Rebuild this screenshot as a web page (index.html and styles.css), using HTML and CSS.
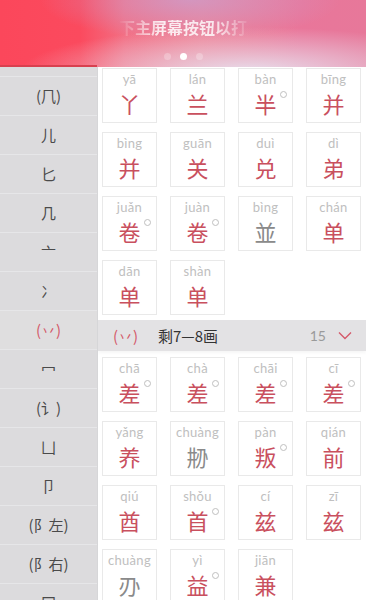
FILE: index.html
```
<!DOCTYPE html>
<html>
	<head>
		<meta charset="UTF-8">
		<title>部首查字</title>
		<link rel="stylesheet" href="styles.css">
	</head>
	<body>
		<div class="screen">
			<div class="banner">
				<div class="banner-text">下主屏幕按钮以打</div>
				<div class="dots"><i></i><i class="on"></i><i></i></div>
			</div>
			<div class="main">
				<div class="radicals">
					<ul>
						<li></li>
						<li>(⺇)</li>
						<li>儿</li>
						<li>匕</li>
						<li>几</li>
						<li>亠</li>
						<li>冫</li>
						<li class="active">(丷)</li>
						<li>冖</li>
						<li>(讠)</li>
						<li>凵</li>
						<li>卩</li>
						<li>(阝左)</li>
						<li>(阝右)</li>
						<li>冂</li>
					</ul>
				</div>
				<div class="chars">
					<div class="grid">
						<div class="card"><span class="py">yā</span><span class="hz">丫</span></div>
						<div class="card"><span class="py">lán</span><span class="hz">兰</span></div>
						<div class="card"><span class="py">bàn</span><span class="hz">半<i class="deg"></i></span></div>
						<div class="card"><span class="py">bīng</span><span class="hz">并</span></div>
						<div class="card"><span class="py">bìng</span><span class="hz">并</span></div>
						<div class="card"><span class="py">guān</span><span class="hz">关</span></div>
						<div class="card"><span class="py">duì</span><span class="hz">兑</span></div>
						<div class="card"><span class="py">dì</span><span class="hz">弟</span></div>
						<div class="card"><span class="py">juǎn</span><span class="hz">卷<i class="deg"></i></span></div>
						<div class="card"><span class="py">juàn</span><span class="hz">卷<i class="deg"></i></span></div>
						<div class="card"><span class="py">bìng</span><span class="hz grey">並</span></div>
						<div class="card"><span class="py">chán</span><span class="hz">单</span></div>
						<div class="card"><span class="py">dān</span><span class="hz">单</span></div>
						<div class="card"><span class="py">shàn</span><span class="hz">单</span></div>
					</div>

					<div class="group-head">
						<span class="g-rad">(丷)</span>
						<span class="g-title">剩7—8画</span>
						<span class="g-count">15</span>
						<svg class="g-arrow" width="14" height="9" viewBox="0 0 14 9"><path d="M1 1.5 L7 7.5 L13 1.5" fill="none" stroke="#d4596a" stroke-width="1.4"/></svg>
					</div>

					<div class="grid">
						<div class="card"><span class="py">chā</span><span class="hz">差<i class="deg"></i></span></div>
						<div class="card"><span class="py">chà</span><span class="hz">差<i class="deg"></i></span></div>
						<div class="card"><span class="py">chāi</span><span class="hz">差<i class="deg"></i></span></div>
						<div class="card"><span class="py">cī</span><span class="hz">差<i class="deg"></i></span></div>
						<div class="card"><span class="py">yǎng</span><span class="hz">养</span></div>
						<div class="card"><span class="py">chuàng</span><span class="hz grey">刱</span></div>
						<div class="card"><span class="py">pàn</span><span class="hz">叛<i class="deg"></i></span></div>
						<div class="card"><span class="py">qián</span><span class="hz">前</span></div>
						<div class="card"><span class="py">qiú</span><span class="hz">酋</span></div>
						<div class="card"><span class="py">shǒu</span><span class="hz">首<i class="deg"></i></span></div>
						<div class="card"><span class="py">cí</span><span class="hz">兹</span></div>
						<div class="card"><span class="py">zī</span><span class="hz">兹</span></div>
						<div class="card"><span class="py">chuàng</span><span class="hz grey">刅</span></div>
						<div class="card"><span class="py">yì</span><span class="hz">益<i class="deg"></i></span></div>
						<div class="card"><span class="py">jiān</span><span class="hz">兼</span></div>
					</div>
				</div>
			</div>
		</div>
	</body>
</html>
```
FILE: styles.css
```
html,
body,
ul,
li {
	margin: 0;
	padding: 0;
}

body {
	width: 366px;
	height: 600px;
	overflow: hidden;
	background: #fff;
	font-family: "Noto Sans CJK SC", "Noto Sans", sans-serif;
}

.screen {
	width: 366px;
	height: 600px;
	display: flex;
	flex-direction: column;
	overflow: hidden;
}

/* 顶部模糊的通知横幅 */
.banner {
	height: 67px;
	flex: none;
	position: relative;
	background:
		radial-gradient(ellipse 150px 40px at 190px 0px, rgba(200, 160, 210, .7), rgba(200, 160, 210, 0)),
		radial-gradient(ellipse 230px 45px at 250px 72px, rgba(232, 222, 236, 1), rgba(232, 222, 236, 0)),
		linear-gradient(to right, #fb475b 0, #fb4a5e 80px, #f36f84 125px, #ef7f93 200px, #e9769a 300px, #e7789a 366px);
}

.banner::after {
	content: "";
	position: absolute;
	left: 0;
	bottom: 0;
	width: 97px;
	height: 2px;
	background: #d8404f;
}

.banner-text {
	position: absolute;
	left: 0;
	right: 0;
	top: 16px;
	text-align: center;
	font-size: 16px;
	font-weight: bold;
	line-height: 22px;
	color: transparent;
	background: linear-gradient(to right, rgba(255, 255, 255, 0) 118px, rgba(255, 255, 255, .85) 160px, rgba(255, 255, 255, .8) 215px, rgba(255, 255, 255, 0) 252px);
	-webkit-background-clip: text;
	background-clip: text;
}

.dots {
	position: absolute;
	top: 53px;
	left: 0;
	right: 0;
	display: flex;
	justify-content: center;
	gap: 9px;
}

.dots i {
	width: 7px;
	height: 7px;
	border-radius: 50%;
	background: rgba(255, 255, 255, .25);
}

.dots i.on {
	background: #fff;
}

.main {
	flex: 1;
	display: flex;
	overflow: hidden;
}

/* 左侧部首列表 */
.radicals {
	width: 97px;
	flex: none;
	background: #dcdbdd;
	overflow: hidden;
	border-right: 1px solid #d6d6d8;
}

.radicals ul {
	list-style: none;
	margin-top: -29px;
}

.radicals li {
	height: 38px;
	line-height: 38px;
	border-bottom: 1px solid #e6e6e8;
	text-align: center;
	font-size: 15px;
	color: #4a4a4a;
}

.radicals li.active {
	color: #d4596a;
	background: #dfdedf;
}

/* 右侧汉字 */
.chars {
	flex: 1;
	padding-top: 1px;
	overflow: hidden;
}

.grid {
	display: grid;
	grid-template-columns: repeat(4, 55px);
	column-gap: 13px;
	row-gap: 9px;
	padding-left: 4px;
}

.card {
	height: 53px;
	border: 1px solid #e9e9e9;
	display: flex;
	flex-direction: column;
	align-items: center;
	background: #fff;
}

.py {
	margin-top: 1px;
	height: 18px;
	line-height: 18px;
	font-family: Lato, "DejaVu Sans", sans-serif;
	font-size: 13px;
	color: #c0c0c0;
	letter-spacing: .3px;
}

.hz {
	position: relative;
	line-height: 30px;
	font-size: 22px;
	color: #c9505e;
}

.hz.grey {
	color: #8a8a8a;
}

.deg {
	position: absolute;
	right: -10px;
	top: 3px;
	width: 5px;
	height: 5px;
	border: 1px solid #bfbfbf;
	border-radius: 50%;
}

.group-head {
	margin: 5px 0 6px;
	height: 31px;
	background: #e3e2e4;
	display: flex;
	align-items: center;
	padding: 0 14px 0 15px;
	box-shadow: 0 2px 3px rgba(0, 0, 0, .04);
}

.g-rad {
	color: #d4596a;
	font-size: 15px;
	width: 45px;
}

.g-title {
	flex: 1;
	font-size: 15px;
	color: #333;
}

.g-count {
	font-family: Lato, "DejaVu Sans", sans-serif;
	font-size: 14px;
	color: #9a9a9a;
	margin-right: 12px;
}
```
